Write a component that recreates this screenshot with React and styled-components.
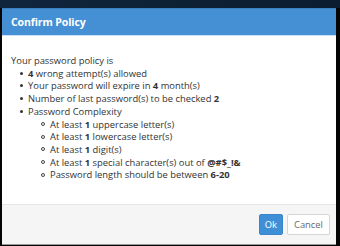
import React from 'react';
import styled, { createGlobalStyle } from 'styled-components';

const GlobalStyle = createGlobalStyle`
    html, body {
        margin: 0;
        padding: 0;
        background: #050505;
    }
    body {
        font-family: "Open Sans", "DejaVu Sans", sans-serif;
    }
`;

const Screen = styled.div`
    width: 340px;
    height: 246px;
    display: flex;
    flex-direction: column;
    background: #050505;
    overflow: hidden;
`;

const TopStrip = styled.div`
    height: 8px;
    flex-shrink: 0;
    background: linear-gradient(to right, #10263c, #0b1d30);
`;

const Modal = styled.div`
    margin: 0 4px 0 2px;
    height: 236px;
    display: flex;
    flex-direction: column;
    background: #fff;
    border-bottom: 1px solid #9a9a9a;
`;

const Header = styled.div`
    height: 28px;
    flex-shrink: 0;
    display: flex;
    align-items: center;
    padding: 0 9px;
    background: #4590d4;
    border-top: 1px solid #3a7fc0;
    border-bottom: 1px solid #cde2f5;
    box-sizing: border-box;
`;

const Title = styled.h4`
    margin: 0;
    color: #fff;
    font-size: 10.5px;
    font-weight: 700;
    letter-spacing: -0.1px;
`;

const Body = styled.div`
    flex: 1;
    padding: 19px 9px 0;
    color: #333;
    font-size: 9.4px;
    line-height: 12.7px;
`;

const List = styled.ul`
    margin: 0;
    padding-left: ${p => (p.nested ? '22px' : '17px')};
    list-style: none;

    & > li::before {
        content: '';
        display: inline-block;
        box-sizing: border-box;
        width: ${p => (p.nested ? '4px' : '3px')};
        height: ${p => (p.nested ? '4px' : '3px')};
        border-radius: 50%;
        margin: 0 ${p => (p.nested ? '5px' : '5px')} 2px ${p => (p.nested ? '-9px' : '-8px')};
        vertical-align: middle;
        background: ${p => (p.nested ? 'transparent' : '#333')};
        border: ${p => (p.nested ? '1px solid #444' : 'none')};
    }
`;

const Footer = styled.div`
    height: 40px;
    flex-shrink: 0;
    display: flex;
    align-items: center;
    justify-content: flex-end;
    gap: 4px;
    padding: 0 6px;
    background: #f5f5f5;
    border-top: 1px solid #e6e6e6;
    box-sizing: border-box;
`;

const Button = styled.button`
    height: 21px;
    padding: 0 ${p => (p.primary ? '5px' : '6px')};
    min-width: ${p => (p.primary ? '21px' : '39px')};
    border-radius: 2px;
    border: 1px solid ${p => (p.primary ? '#3a86cc' : '#d6d6d6')};
    background: ${p => (p.primary ? '#3f8fd7' : '#fff')};
    color: ${p => (p.primary ? '#fff' : '#6a6a6a')};
    font-family: "Open Sans", "DejaVu Sans", sans-serif;
    font-size: 9.4px;
    cursor: pointer;
`;

const App = () => (
    <>
        <GlobalStyle />
        <Screen>
            <TopStrip />
            <Modal>
                <Header>
                    <Title>Confirm Policy</Title>
                </Header>
                <Body>
                    Your password policy is
                    <List>
                        <li><b>4</b> wrong attempt(s) allowed</li>
                        <li>Your password will expire in <b>4</b> month(s)</li>
                        <li>Number of last password(s) to be checked <b>2</b></li>
                        <li>
                            Password Complexity
                            <List nested>
                                <li>At least <b>1</b> uppercase letter(s)</li>
                                <li>At least <b>1</b> lowercase letter(s)</li>
                                <li>At least <b>1</b> digit(s)</li>
                                <li>At least <b>1</b> special character(s) out of <b>@#$_!&amp;</b></li>
                                <li>Password length should be between <b>6-20</b></li>
                            </List>
                        </li>
                    </List>
                </Body>
                <Footer>
                    <Button primary>Ok</Button>
                    <Button>Cancel</Button>
                </Footer>
            </Modal>
        </Screen>
    </>
);

export default App;
